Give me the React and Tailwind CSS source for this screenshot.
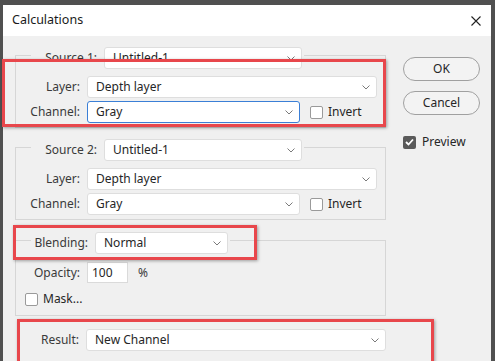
import React from 'react';

const font = { fontFamily: '"Noto Sans", "Open Sans", sans-serif' };

function Chevron() {
  return (
    <svg width="8" height="5" viewBox="0 0 8 5" className="shrink-0">
      <polyline points="0.5,0.5 4,4 7.5,0.5" fill="none" stroke="#7a7a7a" strokeWidth="1" />
    </svg>
  );
}

function Select({ value, className, focused }) {
  return (
    <div
      className={`${className} h-[22px] flex items-center justify-between bg-white border rounded-[3px] pl-[8px] pr-[6px] ${
        focused ? 'border-[#3b7fd6]' : 'border-[#dedede]'
      }`}
    >
      <span className="text-[#262626] leading-none">{value}</span>
      <Chevron />
    </div>
  );
}

function Checkbox({ checked }) {
  if (checked) {
    return (
      <div className="w-[13px] h-[13px] rounded-[2px] bg-[#5a5a5a] flex items-center justify-center shrink-0">
        <svg width="9" height="8" viewBox="0 0 9 8">
          <polyline points="1,4 3.5,6.5 8,1.5" fill="none" stroke="#fff" strokeWidth="1.8" />
        </svg>
      </div>
    );
  }
  return <div className="w-[13px] h-[13px] rounded-[2px] bg-white border border-[#9a9a9a] shrink-0" />;
}

function Row({ label, children, className = '' }) {
  return (
    <div className={`flex items-center h-[22px] ${className}`}>
      <span className="w-[64px] text-right text-[#3a3a3a]">{label}</span>
      <div className="ml-[7px] flex items-center">{children}</div>
    </div>
  );
}

function SourceGroup({ n, className }) {
  return (
    <fieldset className={`w-[371px] border border-[#d6d6d6] pb-[4px] ${className}`}>
      <legend className="ml-[15px] px-[2px] pt-[6px] flex items-center">
        <span className="w-[64px] text-right text-[#3a3a3a]">Source {n}:</span>
        <div className="ml-[7px]">
          <Select value="Untitled-1" className="w-[198px]" />
        </div>
      </legend>
      <Row label="Layer:" className="mt-[7px]">
        <Select value="Depth layer" className="w-[290px]" />
      </Row>
      <Row label="Channel:" className="mt-[3px]">
        <Select value="Gray" className="w-[213px]" focused={n === 1} />
        <div className="ml-[10px]">
          <Checkbox />
        </div>
        <span className="ml-[5px] text-[#262626]">Invert</span>
      </Row>
    </fieldset>
  );
}

function Button({ children, className = '' }) {
  return (
    <div
      className={`w-[77px] h-[24px] rounded-full border border-[#a0a0a0] bg-[#f3f3f3] flex items-center justify-center text-[#262626] ${className}`}
    >
      {children}
    </div>
  );
}

export default function App() {
  return (
    <div
      className="relative w-[495px] h-[361px] overflow-hidden bg-[#505050] pl-[3px] pt-[5px] pr-[4px] flex flex-col text-[12px]"
      style={font}
    >
      {/* Title bar */}
      <div className="h-[31px] bg-white flex items-center justify-between pl-[9px] pr-[10px] shrink-0">
        <span className="text-[#1a1a1a] text-[12.5px]">Calculations</span>
        <svg width="10" height="10" viewBox="0 0 10 10">
          <path d="M0.5 0.5 L9.5 9.5 M9.5 0.5 L0.5 9.5" stroke="#222" strokeWidth="1.1" />
        </svg>
      </div>

      {/* Body */}
      <div className="flex-1 bg-[#f0f0f0] flex pl-[12px]">
        <div className="w-[371px] flex flex-col pt-[5px]">
          <SourceGroup n={1} />
          <SourceGroup n={2} className="mt-[5px]" />

          {/* Blending group */}
          <fieldset className="w-[371px] border border-[#d6d6d6] pb-[8px] mt-[6px]">
            <legend className="ml-[15px] px-[2px] pt-[6px] flex items-center">
              <span className="w-[55px] text-right text-[#3a3a3a]">Blending:</span>
              <div className="ml-[7px]">
                <Select value="Normal" className="w-[133px]" />
              </div>
            </legend>
            <div className="flex items-center h-[21px] mt-[8px]">
              <span className="w-[64px] text-right text-[#3a3a3a]">Opacity:</span>
              <div className="ml-[7px] w-[41px] h-[21px] bg-white border border-[#dadada] flex items-center pl-[4px] text-[#262626]">
                100
              </div>
              <span className="ml-[10px] text-[#3a3a3a]">%</span>
            </div>
            <div className="flex items-center h-[16px] mt-[8px] pl-[9px]">
              <Checkbox />
              <span className="ml-[5px] text-[#262626]">Mask...</span>
            </div>
          </fieldset>

          <Row label="Result:" className="mt-[13px]">
            <Select value="New Channel" className="w-[300px]" />
          </Row>
        </div>

        {/* Right column */}
        <div className="ml-[17px] flex flex-col">
          <Button className="mt-[21px]">OK</Button>
          <Button className="mt-[10px]">Cancel</Button>
          <div className="flex items-center h-[16px] mt-[19px]">
            <Checkbox checked />
            <span className="ml-[6px] text-[#262626]">Preview</span>
          </div>
        </div>
      </div>

      {/* Annotation outlines */}
      <div className="absolute left-[2px] top-[59px] w-[384px] h-[68px] border-[3px] border-[#e8474c] shadow-[1px_1px_3px_rgba(0,0,0,0.35)]" />
      <div className="absolute left-[13px] top-[225px] w-[244px] h-[35px] border-[3px] border-[#e8474c] shadow-[1px_1px_3px_rgba(0,0,0,0.35)]" />
      <div className="absolute left-[17px] top-[319px] w-[417px] h-[50px] border-[3px] border-[#e8474c] shadow-[1px_1px_3px_rgba(0,0,0,0.35)]" />
    </div>
  );
}
